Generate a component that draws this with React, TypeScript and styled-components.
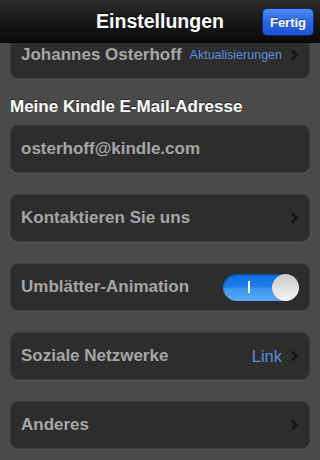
import styled, { createGlobalStyle } from "styled-components";

const GlobalStyle = createGlobalStyle`
  html, body {
    margin: 0;
    padding: 0;
    background: #4a4a4a;
  }
  body {
    font-family: "Liberation Sans", Arial, sans-serif;
  }
`;

const Page = styled.div`
  width: 320px;
  height: 460px;
  display: flex;
  flex-direction: column;
  background: #4a4a4a;
  overflow: hidden;
`;

const NavBar = styled.header`
  height: 43px;
  flex-shrink: 0;
  position: relative;
  z-index: 2;
  display: flex;
  align-items: center;
  justify-content: center;
  background: linear-gradient(#2c2c2c, #151515 60%, #0b0b0b);
  border-bottom: 1px solid #050505;
  box-sizing: border-box;
`;

const Title = styled.h1`
  margin: 0;
  color: #fff;
  font-size: 19.5px;
  font-weight: bold;
  text-shadow: 0 -1px 0 #000;
`;

const DoneButton = styled.button`
  position: absolute;
  right: 6px;
  top: 8px;
  width: 52px;
  height: 28px;
  border: 1px solid #0d2a6e;
  border-radius: 5px;
  background: linear-gradient(#4a8af4, #2c66e4 50%, #1b52d4);
  color: #fff;
  font-family: inherit;
  font-size: 13px;
  font-weight: bold;
  text-shadow: 0 -1px 0 rgba(0, 0, 0, 0.4);
  padding: 0;
`;

const Scroll = styled.main`
  flex: 1;
  overflow: hidden;
`;

const Content = styled.div`
  margin-top: -12px;
  padding: 0 10px;
  display: flex;
  flex-direction: column;
`;

const Card = styled.div<{ $gap?: number }>`
  height: 48px;
  box-sizing: border-box;
  margin-top: ${({ $gap }) => $gap ?? 21}px;
  display: flex;
  align-items: center;
  padding: 0 10px 0 10px;
  background: #2d2d2d;
  border: 1px solid #3a3a3a;
  border-radius: 8px;
  box-shadow: 0 1px 0 #555;
`;

const Label = styled.span`
  flex: 1;
  color: #a6a6a6;
  font-size: 17px;
  font-weight: bold;
  white-space: nowrap;
`;

const Value = styled.span<{ $small?: boolean }>`
  color: #5a8ed6;
  font-size: ${({ $small }) => ($small ? 12.5 : 16.5)}px;
  margin-right: 8px;
  white-space: nowrap;
`;

const SectionHeading = styled.h2`
  margin: 18px 0 -13px;
  color: #fff;
  font-size: 17px;
  font-weight: bold;
  line-height: 20px;
  text-shadow: 0 -1px 0 #222;
`;

const Track = styled.div`
  width: 76px;
  height: 27px;
  box-sizing: border-box;
  border-radius: 14px;
  background: linear-gradient(#0f6ee0, #1a7de8 45%, #3d96f0 55%, #5aa8f4);
  display: flex;
  align-items: center;
  justify-content: space-between;
  padding-left: 25px;
  box-shadow: inset 0 1px 2px rgba(0, 0, 0, 0.4);
`;

const OnMark = styled.span`
  width: 2px;
  height: 12px;
  background: #fff;
`;

const Knob = styled.span`
  width: 27px;
  height: 27px;
  border-radius: 50%;
  background: linear-gradient(#c9c9c9, #f4f4f4);
  box-shadow: 0 0 1px rgba(0, 0, 0, 0.6);
`;

const Chevron = () => (
  <svg width="9" height="12" viewBox="0 0 9 12">
    <path d="M2 1.5 L6.5 6 L2 10.5" fill="none" stroke="#161616" strokeWidth="3" />
  </svg>
);

export default function App() {
  return (
    <Page>
      <GlobalStyle />
      <NavBar>
        <Title>Einstellungen</Title>
        <DoneButton>Fertig</DoneButton>
      </NavBar>
      <Scroll>
        <Content>
          <Card $gap={0}>
            <Label>Johannes Osterhoff</Label>
            <Value $small>Aktualisierungen</Value>
            <Chevron />
          </Card>
          <SectionHeading>Meine Kindle E-Mail-Adresse</SectionHeading>
          <Card>
            <Label>osterhoff@kindle.com</Label>
          </Card>
          <Card>
            <Label>Kontaktieren Sie uns</Label>
            <Chevron />
          </Card>
          <Card>
            <Label>Umblätter-Animation</Label>
            <Track>
              <OnMark />
              <Knob />
            </Track>
          </Card>
          <Card>
            <Label>Soziale Netzwerke</Label>
            <Value>Link</Value>
            <Chevron />
          </Card>
          <Card>
            <Label>Anderes</Label>
            <Chevron />
          </Card>
        </Content>
      </Scroll>
    </Page>
  );
}
